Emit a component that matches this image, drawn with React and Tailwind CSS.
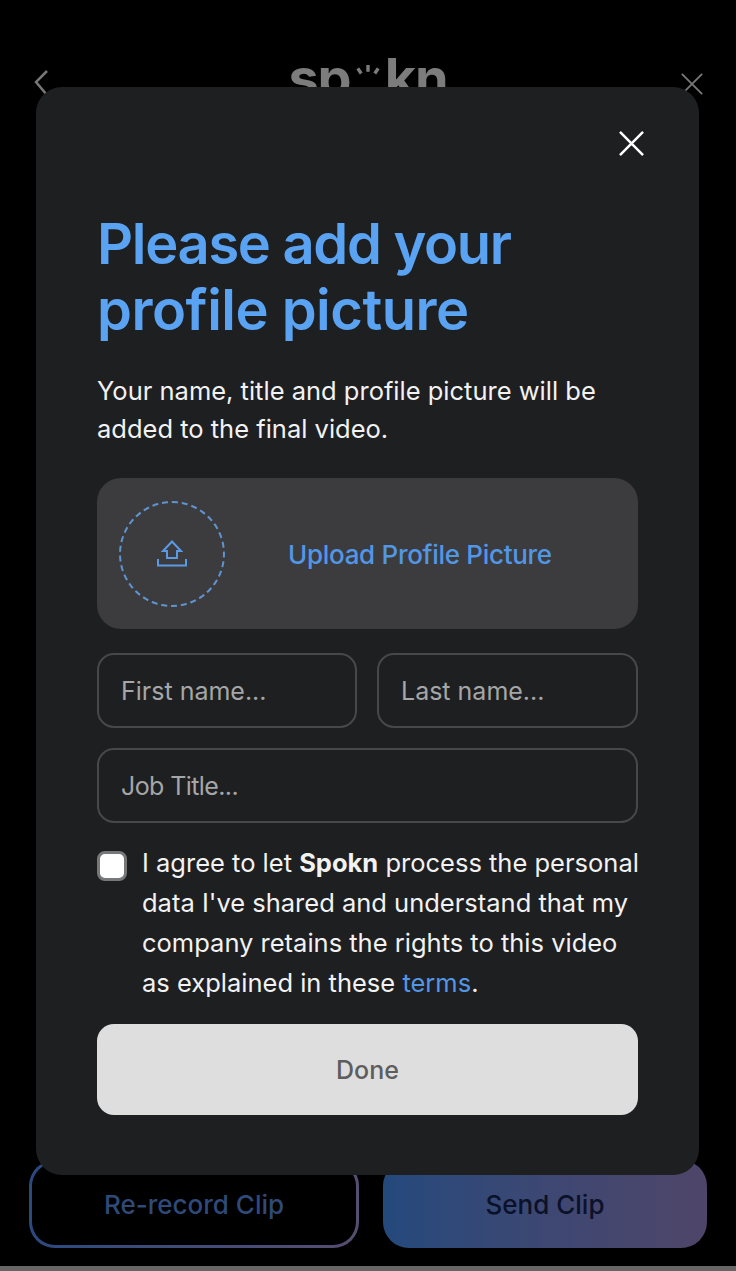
import React from "react";

const font = { fontFamily: "Inter, 'Noto Sans', sans-serif" };

function Cross({ className, stroke, width = 3 }) {
  return (
    <svg viewBox="0 0 26 26" className={className} fill="none" stroke={stroke} strokeWidth={width}>
      <path d="M1 1 L25 25 M25 1 L1 25" />
    </svg>
  );
}

function Field({ placeholder, className = "" }) {
  return (
    <div className={"h-[75px] flex items-center pl-[22px] pt-[3px] rounded-[17px] border-2 border-[#47484a] text-[25px] text-[#a5a6a7] " + className}>
      {placeholder}
    </div>
  );
}

export default function App() {
  return (
    <div style={font} className="relative w-[736px] h-[1271px] bg-black overflow-hidden flex flex-col">
      <div className="flex items-start justify-between pl-[33px] pr-[33px] pt-[48px] h-[1160px] shrink-0">
        <svg viewBox="0 0 16 28" className="w-[16px] h-[28px] mt-[21px]" fill="none" stroke="#777" strokeWidth="2.5">
          <path d="M14 2 L3 13 L14 26" />
        </svg>
        <div className="flex items-center text-[#7c7c7c] text-[54px] font-bold leading-[60px] tracking-[-1px] ml-[6px]">
          <span>sp</span>
          <svg viewBox="0 0 40 40" className="w-[34px] h-[34px] mt-[8px]">
            <circle cx="20" cy="22" r="11" fill="#000" />
            <path d="M20 0 L20 8 M8 4 L12 10 M32 4 L28 10" stroke="#7c7c7c" strokeWidth="4" />
          </svg>
          <span>kn</span>
        </div>
        <Cross className="w-[22px] h-[22px] mt-[25px]" stroke="#777" width={2.2} />
      </div>

      <div className="flex gap-[24px] pl-[29px] pr-[29px]">
        <div className="w-[330px] h-[88px] rounded-[26px] p-[3px] bg-gradient-to-r from-[#2a4a80] to-[#574d70] shrink-0">
          <div className="w-full h-full rounded-[23px] bg-black flex items-center justify-center text-[26px] font-medium text-[#2f4a78]">
            Re-record Clip
          </div>
        </div>
        <div className="w-[324px] h-[88px] rounded-[26px] bg-gradient-to-r from-[#24497c] to-[#4f4569] flex items-center justify-center text-[26px] font-medium text-[#0b1128] shrink-0">
          Send Clip
        </div>
      </div>

      <div className="mt-auto h-[5px] bg-[#666666]" />

      <div className="absolute left-[36px] top-[87px] w-[663px] h-[1088px] rounded-[26px] bg-[#1e1f21] px-[61px] flex flex-col">
        <div className="flex justify-end pt-[44px] -mr-[6px]">
          <Cross className="w-[25px] h-[25px]" stroke="#ffffff" width={2.6} />
        </div>
        <h1 className="mt-[55px] text-[56px] leading-[66px] font-semibold tracking-[-1.3px] text-[#5aa2f2] whitespace-nowrap">
          Please add your
          <br />
          <span className="tracking-[-0.5px]">profile picture</span>
        </h1>
        <p className="mt-[29px] text-[25.5px] leading-[38px] text-[#f2f2f2] whitespace-nowrap">
          Your name, title and profile picture will be
          <br />
          added to the final video.
        </p>
        <div className="mt-[30px] h-[151px] rounded-[24px] bg-[#3c3c3e] flex items-center pl-[22px]">
          <div className="w-[106px] h-[106px] rounded-full border-2 border-dashed border-[#5f94d0] flex items-center justify-center shrink-0">
            <svg viewBox="0 0 30 27" className="w-[30px] h-[27px]" fill="none" stroke="#5a9ae4" strokeWidth="2">
              <path d="M15 1.5 L24 11 L20 11 L20 18 L10 18 L10 11 L6 11 Z" />
              <path d="M1 19 L1 25.5 L29 25.5 L29 19" />
            </svg>
          </div>
          <div className="ml-[63px] pt-[2px] text-[26px] font-medium tracking-[-0.3px] text-[#5297e6] whitespace-nowrap">Upload Profile Picture</div>
        </div>
        <div className="mt-[24px] flex gap-[20px]">
          <Field placeholder="First name..." className="w-[260px]" />
          <Field placeholder="Last name..." className="w-[261px]" />
        </div>
        <Field placeholder="Job Title..." className="mt-[20px] tracking-[-0.6px]" />
        <div className="mt-[20px] flex">
          <div className="mt-[8px] w-[30px] h-[30px] rounded-[8px] bg-white border-[3px] border-[#77787a] shrink-0" />
          <p className="ml-[15px] text-[25.5px] leading-[40px] text-[#f2f2f2] whitespace-nowrap">
            I agree to let <b className="font-bold">Spokn</b> process the personal
            <br />
            data I've shared and understand that my
            <br />
            company retains the rights to this video
            <br />
            as explained in these <span className="text-[#5297e6]">terms</span>.
          </p>
        </div>
        <div className="mt-[21px] h-[91px] pt-[2px] rounded-[17px] bg-[#dedede] flex items-center justify-center text-[25px] font-medium text-[#5d5d5d]">
          Done
        </div>
      </div>
    </div>
  );
}
